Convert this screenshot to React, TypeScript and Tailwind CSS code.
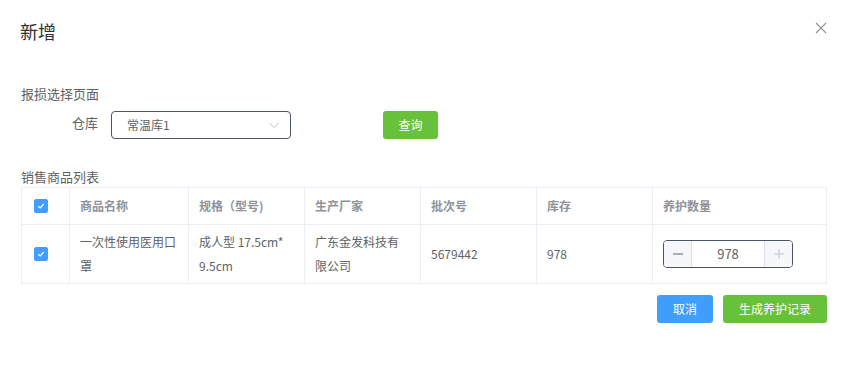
import { useState } from "react";

const font = { fontFamily: '"Noto Sans CJK SC", "Noto Sans", sans-serif' };

const Check = () => (
  <span className="flex h-[14px] w-[14px] items-center justify-center rounded-[2px] border border-[#409eff] bg-[#409eff]">
    <svg width="10" height="10" viewBox="0 0 10 10" fill="none">
      <path d="M2.2 5.2 L4.2 7 L7.8 3" stroke="white" strokeWidth="1.2" />
    </svg>
  </span>
);

export default function App() {
  const [qty, setQty] = useState(978);

  return (
    <div className="relative h-[379px] w-[847px] bg-white text-[#606266]" style={font}>
      {/* header */}
      <div className="flex h-[62px] items-start justify-between pl-5 pr-[20px] pt-[19px]">
        <span className="text-[18px] leading-6 text-[#303133]">新增</span>
        <button className="mt-[3px] text-[#909399]">
          <svg width="12" height="12" viewBox="0 0 12 12" fill="none">
            <path d="M1 1 L11 11 M11 1 L1 11" stroke="currentColor" strokeWidth="1.1" />
          </svg>
        </button>
      </div>

      <div className="px-[21px]">
        <div className="mt-[23px] text-[13px] leading-[18px] text-[#606266]">报损选择页面</div>

        {/* form row */}
        <div className="mt-[8px] flex h-7 items-center">
          <label className="w-[90px] pr-[13px] text-right text-[13px] leading-7 -mt-[4px]">仓库</label>
          <div className="flex h-7 w-[180px] items-center justify-between rounded-[4px] border border-[#4b5563] pl-[15px] pr-[10px]">
            <span className="text-[12px] text-[#606266]">常温库1</span>
            <svg width="12" height="12" viewBox="0 0 12 12" fill="none">
              <path d="M1.5 4 L6 8.5 L10.5 4" stroke="#c0c4cc" strokeWidth="1" />
            </svg>
          </div>
          <button className="ml-[92px] h-7 w-[55px] rounded-[3px] bg-[#67c23a] text-[12px] text-white">查询</button>
        </div>

        <div className="mt-[29px] text-[13px] leading-[18px]">销售商品列表</div>

        {/* table */}
        <table className="mt-[1px] w-[806px] table-fixed border-collapse text-[12px]">
          <colgroup>
            <col className="w-[48px]" />
            <col className="w-[119px]" />
            <col className="w-[116px]" />
            <col className="w-[116px]" />
            <col className="w-[116px]" />
            <col className="w-[116px]" />
            <col />
          </colgroup>
          <thead>
            <tr className="h-[37px] text-left font-semibold text-[#909399]">
              <th className="border border-[#ebeef5] pl-[12px]"><Check /></th>
              <th className="border border-[#ebeef5] px-[10px] font-semibold">商品名称</th>
              <th className="border border-[#ebeef5] px-[10px] font-semibold">规格（型号)</th>
              <th className="border border-[#ebeef5] px-[10px] font-semibold">生产厂家</th>
              <th className="border border-[#ebeef5] px-[10px] font-semibold">批次号</th>
              <th className="border border-[#ebeef5] px-[10px] font-semibold">库存</th>
              <th className="border border-[#ebeef5] px-[10px] font-semibold">养护数量</th>
            </tr>
          </thead>
          <tbody>
            <tr className="h-[59px] leading-6">
              <td className="border border-[#ebeef5] pl-[12px]"><Check /></td>
              <td className="border border-[#ebeef5] px-[10px]">一次性使用医用口罩</td>
              <td className="border border-[#ebeef5] px-[10px]">成人型 17.5cm* 9.5cm</td>
              <td className="border border-[#ebeef5] px-[10px]">广东金发科技有限公司</td>
              <td className="border border-[#ebeef5] px-[10px]">5679442</td>
              <td className="border border-[#ebeef5] px-[10px]">978</td>
              <td className="border border-[#ebeef5] px-[10px]">
                <div className="flex h-7 w-[130px] items-stretch overflow-hidden rounded-[4px] border border-[#4b5563]">
                  <button
                    onClick={() => setQty(qty - 1)}
                    className="flex w-[28px] items-center justify-center border-r border-[#dcdfe6] bg-[#f5f7fa] text-[#606266]"
                  >
                    <svg width="10" height="10" viewBox="0 0 10 10"><path d="M0 5 H10" stroke="currentColor" strokeWidth="1" /></svg>
                  </button>
                  <span className="flex flex-1 items-center justify-center text-[13px] text-[#606266]">{qty}</span>
                  <button
                    onClick={() => setQty(qty + 1)}
                    className="flex w-[28px] items-center justify-center border-l border-[#dcdfe6] bg-[#f5f7fa] text-[#c0c4cc]"
                  >
                    <svg width="10" height="10" viewBox="0 0 10 10"><path d="M0 5 H10 M5 0 V10" stroke="currentColor" strokeWidth="1" /></svg>
                  </button>
                </div>
              </td>
            </tr>
          </tbody>
        </table>

        {/* footer */}
        <div className="mt-[11px] flex w-[806px] justify-end gap-[10px]">
          <button className="h-7 w-[56px] rounded-[3px] bg-[#409eff] text-[12px] text-white">取消</button>
          <button className="h-7 w-[104px] rounded-[3px] bg-[#67c23a] text-[12px] text-white">生成养护记录</button>
        </div>
      </div>
    </div>
  );
}
